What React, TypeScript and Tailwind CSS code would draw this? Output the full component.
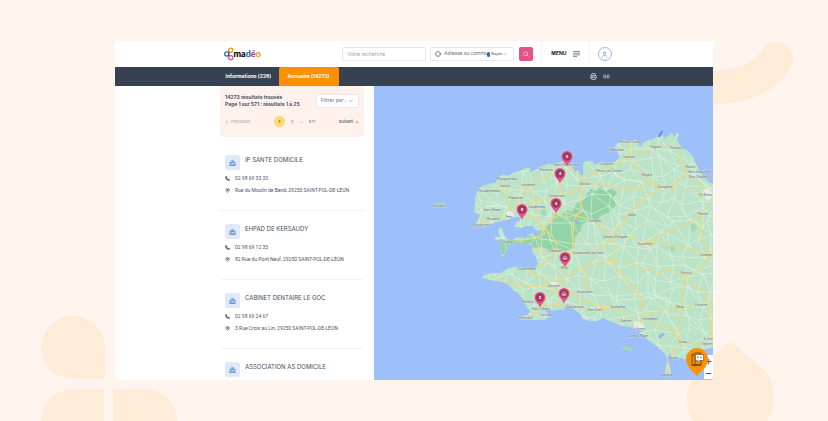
import { ArrowLeft, ArrowRight, ChevronDown, Crosshair, Link2, MapPin, Phone, Printer, Search, User } from "lucide-react";

type Result = { name: string; phone?: string; address?: string };

const results: Result[] = [
  { name: "IP SANTE DOMICILE", phone: "02 98 69 33 33", address: "Rue du Moulin de Band, 29250 SAINT-POL-DE-LÉON" },
  { name: "EHPAD DE KERSAUDY", phone: "02 98 69 12 35", address: "82 Rue du Pont Neuf, 29250 SAINT-POL-DE-LÉON" },
  { name: "CABINET DENTAIRE LE GOC", phone: "02 98 69 24 67", address: "3 Rue Croix au Lin, 29250 SAINT-POL-DE-LÉON" },
  { name: "ASSOCIATION AS DOMICILE" },
];

const COAST =
  "M475 226L477 221 480 215 474 212 475 205 475 198 477 192 480 187 488 184 495 183 498 178 502 175 508 176 513 173 520 171 528 167 531 169 529 173 535 170 540 167 548 164 557 164 563 161 568 163 573 167 575 172 578 170 580 174 583 176 583 170 583 163 587 161 592 161 595 165 601 162 607 163 615 162 620 157 617 151 614 148 617 144 623 140 630 141 637 140 640 147 645 141 650 140 657 137 662 132 664 139 668 136 672 133 674 137 677 133 679 134 677 139 679 143 682 148 688 151 693 157 695 161 697 166 701 173 706 180 713 184 720 186 720 346 706 349 701 353 694 349 689 355 687 360 680 358 673 358 669 353 668 361 670 368 671 373 666 376 665 370 667 362 667 357 661 350 655 345 648 340 641 334 636 329 630 327 623 326 617 324 609 321 603 318 597 321 590 321 583 319 579 313 575 310 571 307 567 303 564 310 557 310 552 311 549 307 545 310 550 317 544 320 533 320 520 319 519 317 528 315 530 311 526 306 522 298 518 293 513 290 509 285 505 283 497 281 490 280 482 278 484 275 492 273 500 273 507 269 513 267 520 267 528 269 535 270 538 263 536 257 532 252 533 246 527 243 516 243 508 246 505 253 502 258 501 249 502 243 495 239 494 237 500 237 498 230 502 227 503 232 506 238 512 240 518 237 526 238 531 234 538 234 541 231 535 230 533 226 526 226 521 228 514 227 516 223 520 220 521 217 515 217 506 220 496 222 486 226Z";

const FOREST =
  "M495 239L512 240 526 238 541 231 545 227 551 223 554 213 560 215 567 210 572 212 577 203 584 200 590 189 597 191 600 186 606 191 611 189 617 192 613 198 616 205 610 212 600 216 598 221 590 219 582 225 580 232 575 237 574 248 566 252 557 248 550 250 542 247 535 248 530 243 516 243 507 247 502 258 501 246Z";

const MAIN_ROADS = [
  "M475 224L493 220 506 215 513 208 530 203 545 199 560 195 573 192 583 183 598 184 620 188 641 189 650 181 657 186 668 188 678 192 690 191 713 194",
  "M583 183L588 176 602 171 613 166 622 160 630 156 645 151 660 147 672 146 680 149 682 163 686 174 677 183 665 187",
  "M625 142L630 145 629 156 636 165 642 175 650 181 664 187M686 174L695 183 706 189",
  "M567 166L577 174 583 183 580 198 581 211 575 217 573 231 573 249 568 263 560 275 554 285",
  "M511 210L507 197 506 184M516 207L529 185 535 200 538 218M520 210L532 218 539 219 543 228 552 235 558 250",
  "M509 242L531 239 545 234 541 226M556 212L552 219 543 229M552 219L565 212 580 217 595 221 606 231 613 236",
  "M613 236L630 237 645 243 662 242 675 247 693 250 713 256M613 236L621 225 630 212 640 203 652 193 665 187",
  "M645 243L658 236 672 230 690 223 702 213 710 202M702 213L701 229 704 244 713 256",
  "M533 248L544 252 556 251 575 254 590 253 604 247 613 236 615 248 612 260",
  "M554 285L565 277 585 266 612 260 630 263 647 270 659 273 668 269 686 275 701 270 706 260 713 255",
  "M612 260L622 275 632 288 642 300 644 316M686 275L683 292 681 308 680 325 680 342",
  "M686 275L693 285 707 292 709 310 711 330 713 344M681 308L701 304 713 302",
  "M554 285L563 286 573 293 579 300 591 303 609 307 621 311 628 320 636 324 645 318 655 323 666 328 674 334 682 342 697 344 713 344",
  "M637 323L650 315 665 309 681 308M554 285L540 287 522 285 508 283 493 277M554 285L546 296 541 308 529 317",
  "M527 269L537 276 554 285 558 294 560 304 573 306 591 310 618 307M527 269L541 266 556 252M586 292L587 280 582 266",
  "M682 342L673 353 668 359 668 373M541 308L551 305 560 305M565 173L560 182 560 195 556 212",
  "M553 174L545 177 529 185 518 184M488 191L502 190 506 184",
];

const towns: [string, number, number][] = [
  ["Ouessant", 438, 207], ["Plouescat", 546, 171], ["Saint-Pol-de-Léon", 567, 166], ["Plouguerneau", 507, 180],
  ["Lannilis", 505, 187], ["Lesneven", 528, 186], ["Ploudalmézeau", 489, 192], ["Plabennec", 516, 199],
  ["Saint-Renan", 492, 211], ["Plouzané", 493, 220], ["Brest", 509, 218], ["Plougonvelin", 482, 226],
  ["Landerneau", 537, 208], ["Landivisiau", 557, 197], ["Crozon", 508, 243], ["Morlaix", 585, 185],
  ["Perros-Guirec", 630, 143], ["Trébeurden", 616, 151], ["Lannion", 629, 158], ["Tréguier", 655, 148],
  ["Paimpol", 676, 149], ["Locquirec", 607, 165], ["Plestin-les-Grèves", 609, 172], ["Bégard", 647, 176],
  ["Guingamp", 665, 188], ["Plouha", 690, 168], ["Saint-Quay-Portr.", 700, 173], ["Binic-Étables-s.", 700, 178],
  ["St-Brieuc", 706, 196], ["Plaintel", 703, 215], ["Callac", 632, 216], ["Huelgoat", 595, 222],
  ["Carhaix-Plouguer", 615, 238], ["Rostrenen", 645, 245], ["Châteaulin", 555, 252], ["Châteauneuf-du-Faou", 588, 254],
  ["Loudéac", 706, 256], ["Douarnenez", 527, 270], ["Briec", 565, 269], ["Quimper", 554, 287],
  ["Pontivy", 686, 274], ["Rosporden", 585, 293], ["Plonéour", 528, 303], ["Pont-l'Abbé", 540, 310],
  ["Penmarch", 526, 319], ["Loctudy", 546, 316], ["Concarneau", 575, 308], ["Pont-Aven", 595, 311],
  ["Quimperlé", 618, 308], ["Quéven", 626, 322], ["Hennebont", 650, 320], ["Lorient", 640, 330],
  ["Larmor-Plage", 638, 337], ["Baud", 680, 308], ["Locminé", 701, 306], ["Auray", 683, 343],
  ["Vannes", 707, 345], ["St-Avé", 708, 340], ["Carnac", 673, 359], ["Quiberon", 667, 376],
];

const pins = [
  { label: "5", x: 567, y: 157 },
  { label: "4", x: 560, y: 174 },
  { label: "4", x: 556, y: 204 },
  { label: "8", x: 522, y: 210 },
  { label: "", x: 565, y: 258 },
  { label: "", x: 564, y: 294 },
  { label: "2", x: 540, y: 298 },
];

// country lanes: a jittered grid, clipped by the coast
function laneNetwork() {
  const step = 13;
  const jitter = (a: number, b: number) => {
    const v = Math.sin(a * 127 + b * 311) * 43758;
    return (v - Math.floor(v)) * step;
  };
  const at = (i: number, j: number) =>
    `${Math.round(472 + i * step + jitter(i, j))} ${Math.round(128 + j * step + jitter(j + 40, i))}`;
  let d = "";
  for (let i = -1; i < 20; i++) {
    for (let j = -1; j < 20; j++) {
      d += `M${at(i, j)}L${at(i + 1, j)}M${at(i, j)}L${at(i, j + 1)}`;
      if ((i * 3 + j) % 2 === 0) d += `M${at(i, j)}L${at(i + 1, j + 1)}`;
    }
  }
  return d;
}

const LANES = laneNetwork();

function BrittanyMap() {
  return (
    <svg viewBox="374 86 339 294" preserveAspectRatio="xMinYMin slice" className="absolute inset-0 h-full w-full" role="img" aria-label="Carte">
      <defs>
        <clipPath id="land">
          <path d={COAST} />
        </clipPath>
      </defs>
      <rect x="374" y="86" width="900" height="900" fill="#9dc0fa" />
      <path d={COAST} fill="#bbe3c7" />
      <g clipPath="url(#land)" fill="none" strokeLinejoin="round">
        <path d={FOREST} fill="#93d3a5" />
        <path d="M689 225l6-2 2 6-5 3zM665 247l7-2 4 5-6 3zM610 167l5 1-2 4zM540 212l5-4 2 6-4 3z" fill="#a4d9b2" />
        <path d={LANES} stroke="#e6f3e4" strokeWidth="0.7" opacity="0.85" />
        {MAIN_ROADS.map((d) => (
          <path key={d} d={d} stroke="#f1d67f" strokeWidth="1.2" />
        ))}
        <path d="M503 216l5-5 5 1 1 5-7 3zM703 190l6-2 5 7-6 6-4-4zM634 321l6 1 5 5-6 6-5-5zM551 282l6 0 1 4-6 1z" fill="#eceef0" opacity="0.85" />
        <path d="M574 220l5 1 0 3-4-1zM658 336l4-3 3 1-5 5zM637 324l2 6 5 2-6 0z" fill="#8fb8f3" />
      </g>
      <path d="M658 136l2-4 3-2-1 5-3 3z" fill="#5b97f0" />
      <path d="M434 205l4-2 5-1 2 3-5 2zM621 346l6 0 6 3-1 2-7-1zM681 133l2 3-1 2z" fill="#a6d9b2" />
      <g fontFamily="Inter, sans-serif" fontSize="3" fill="#535d66" stroke="#e6f1ea" strokeWidth="0.3" paintOrder="stroke" textAnchor="middle">
        {towns.map(([name, x, y]) => (
          <text key={name} x={x} y={y}>{name}</text>
        ))}
      </g>
      {pins.map((pin) => (
        <g key={`${pin.x}-${pin.y}`} transform={`translate(${pin.x} ${pin.y})`}>
          <path d="M0 9.500C-1.500 5.500-5.500 3.500-5.500-.5a5.500 5.500 0 1 1 11 0C5.500 3.500 1.500 5.500 0 9.500Z" fill="#e65587" />
          <circle cy="-0.500" r="4.200" fill="#9f3560" />
          {pin.label ? (
            <text y="1" fontSize="4" fontWeight="700" fontFamily="Inter, sans-serif" fill="#fff" textAnchor="middle">{pin.label}</text>
          ) : (
            <path d="M-2 1.200V-.6L0-2.200 2-.6V1.200ZM-.5 1.200V0H.5V1.200" fill="none" stroke="#f6dce6" strokeWidth="0.7" />
          )}
        </g>
      ))}
    </svg>
  );
}

function Logo() {
  return (
    <a href="#" aria-label="madéo" className="flex items-center text-black">
      <svg viewBox="0 0 10 14" className="h-[14px] w-[10px]" fill="none" strokeWidth="1.300">
        <circle cx="6.700" cy="3.200" r="2.100" stroke="#f59517" />
        <circle cx="2.800" cy="7" r="2.100" stroke="#2b62c4" />
        <circle cx="6.700" cy="10.800" r="2.100" stroke="#e65587" />
        <path d="M5 4.800q0 1.500-1 1.500M5 9.200q0-1.200-1-1.500" stroke="#444a75" />
      </svg>
      <span className="font-['Lato'] text-[9px] leading-3 font-black">
        ma<span className="text-[#2b62c4]">d</span><span className="text-[#b0417f]">é</span><span className="text-[#f59517]">o</span>
      </span>
    </a>
  );
}

function BuildingIcon() {
  return (
    <span className="flex size-[15px] shrink-0 items-center justify-center rounded-[2px] bg-[#e0e9f8]">
      <svg viewBox="0 0 16 16" className="size-[7px]" fill="none" stroke="#5f88c6" strokeWidth="1.800">
        <path d="M1 15h14M2 15V8h3M14 15V8h-3M5 15V5l3-3 3 3v10M8 5v4M6 7h4M8 15v-3" />
      </svg>
    </span>
  );
}

function ResultCard({ name, phone, address }: Result) {
  return (
    <li className="h-[69px] shrink-0 border-b border-gray-100 pl-[5px] pt-[13px]">
      <div className="flex gap-[5px]">
        <BuildingIcon />
        <h2 className="text-[6px] leading-[9px] text-[#3f4a5c]">{name}</h2>
      </div>
      {phone && (
        <p className="mt-[5px] flex items-center gap-[5px] font-['Roboto',sans-serif] text-[5px] leading-[7px] text-[#4a5568]">
          <Phone className="size-[5px] fill-current" />
          {phone}
        </p>
      )}
      {address && (
        <p className="mt-[5px] flex items-center gap-[5px] whitespace-nowrap font-['Roboto',sans-serif] text-[5px] leading-[7px] text-[#4a5568]">
          <MapPin className="size-[5px]" strokeWidth={3} />
          {address}
        </p>
      )}
    </li>
  );
}

function Header() {
  return (
    <header className="flex h-[26px] shrink-0 justify-center pl-[7px]">
      <div className="flex w-[388px] items-center">
        <Logo />
        <input
          type="search"
          aria-label="Votre recherche"
          placeholder="Votre recherche"
          className="ml-auto h-[14px] w-[84px] rounded-[2px] border border-gray-200 px-1 text-[5px] placeholder:text-gray-400"
        />
        <label className="ml-1 flex h-[14px] w-[84px] items-center rounded-[2px] border border-gray-200 px-1">
          <Crosshair className="size-[6px] shrink-0 text-gray-600" />
          <input
            aria-label="Adresse ou commune"
            placeholder="Adresse ou commu"
            className="ml-[3px] w-[43px] min-w-0 font-['Roboto',sans-serif] text-[5px] placeholder:text-gray-500"
          />
          <span className="h-[5px] w-[3px] shrink-0 rounded-full bg-[#24799b]" />
          <span className="ml-px font-['Roboto',sans-serif] text-[4px] text-gray-600">Rayon</span>
          <ChevronDown className="ml-px size-1 shrink-0 text-gray-600" />
        </label>
        <button aria-label="Rechercher" className="ml-[5px] flex size-[14px] items-center justify-center rounded-[2px] bg-[#e35384] text-white">
          <Search className="size-[6px]" />
        </button>
        <div className="ml-2 flex h-[26px] items-center border-x border-gray-100 px-[9px]">
          <button className="flex items-center gap-[6px] text-[5px] font-bold text-gray-900">
            MENU
            <svg viewBox="0 0 7 6" className="h-[6px] w-[7px]" stroke="#6b7686" strokeWidth="0.800">
              <path d="M0 .5h7M0 2.200h7M0 3.900h7M0 5.500h4" />
            </svg>
          </button>
        </div>
        <button aria-label="Mon compte" className="ml-2 flex size-[14px] items-center justify-center rounded-full border border-[#9db7e0] text-[#5f88c6]">
          <User className="size-[7px]" />
        </button>
      </div>
    </header>
  );
}

function Tabs() {
  return (
    <nav className="flex h-[19px] shrink-0 justify-center bg-[#364152] pl-[7px] text-white">
      <div className="flex w-[388px] items-center px-[2px] text-[5px] font-bold">
        <a href="#informations" className="w-[53px]">Informations (228)</a>
        <a href="#annuaire" className="flex h-full w-[60px] items-center justify-center rounded-t-[2px] bg-[#fb9003]">Annuaire (14273)</a>
        <button aria-label="Imprimer" className="ml-auto"><Printer className="size-[7px]" /></button>
        <button aria-label="Copier le lien" className="ml-[6px]"><Link2 className="size-[7px]" /></button>
      </div>
    </nav>
  );
}

function Decor() {
  return (
    <>
      <div className="absolute bottom-[42px] left-[41px] h-[63px] w-16 rounded-[32px] rounded-br-[3px] bg-[#feebd8]" />
      <div className="absolute -bottom-8 left-[41px] h-16 w-[63px] rounded-tl-[32px] rounded-tr-[2px] bg-[#feebd8]" />
      <div className="absolute -bottom-8 left-[113px] h-16 w-16 rounded-tl-[2px] rounded-tr-[32px] bg-[#feebd8]" />
      <svg viewBox="0 0 128 90" className="absolute right-0 top-[30px] h-[90px] w-32">
        <path d="M76 29C66 47 46 58 0 58" fill="none" stroke="#feebd8" strokeWidth="34" strokeLinecap="round" />
      </svg>
      <svg viewBox="0 0 88 80" className="absolute bottom-0 right-[53px] h-20 w-[88px]">
        <path d="M38 4Q43-1 48 4L74 26C84 34 87 46 87 58C87 68 83 76 79 82H8C3 76 0 68 0 58C0 46 5 36 12 29Z" fill="#feebd8" />
      </svg>
    </>
  );
}

export default function App() {
  return (
    <div className="relative flex h-screen flex-col overflow-hidden bg-[#fff5ee] px-[115px] py-[41px] font-['Inter',sans-serif]">
      <Decor />
      <div className="relative flex min-h-0 flex-1 flex-col overflow-hidden rounded-[3px] bg-white">
        <Header />
        <Tabs />
        <main className="grid min-h-0 flex-1 grid-cols-[259px_1fr]">
          <section className="ml-auto mr-[10px] flex w-36 min-h-0 flex-col overflow-hidden">
            <div className="h-[51px] shrink-0 rounded-b-[4px] bg-[#fff1eb] px-[5px] pt-2 text-[#4a5568]">
              <div className="flex items-start justify-between">
                <p className="whitespace-nowrap text-[5px] leading-[7px] font-bold">
                  14273 résultats trouvés
                  <br />
                  Page 1 sur 571 : résultats 1 à 25
                </p>
                <button className="flex h-[14px] w-[43px] items-center justify-center gap-[2px] rounded-[2px] border border-gray-200 bg-white text-[5px] text-gray-500">
                  Filtrer par :
                  <ChevronDown className="size-[6px]" />
                </button>
              </div>
              <div className="mt-2 flex items-center justify-between text-[4px]">
                <button disabled className="flex items-center gap-[2px] text-gray-400">
                  <ArrowLeft className="size-1" /> Précédent
                </button>
                <div className="flex items-center gap-[6px]">
                  <span className="flex size-[11px] items-center justify-center rounded-full bg-[#ffda73] font-bold">1</span>
                  <a href="#2">2</a>
                  <span>...</span>
                  <a href="#571">571</a>
                </div>
                <button className="flex items-center gap-[2px] font-medium">
                  Suivant <ArrowRight className="size-1" />
                </button>
              </div>
            </div>
            <ul className="mt-[5px] flex flex-col">
              {results.map((result) => (
                <ResultCard key={result.name} {...result} />
              ))}
            </ul>
          </section>
          <section className="relative overflow-hidden bg-[#9dc0fa]">
            <BrittanyMap />
            <div className="absolute bottom-px right-0 flex w-[9px] flex-col bg-white text-[#555]">
              <button aria-label="Zoom avant" className="h-3 text-[12px] leading-3">+</button>
              <button aria-label="Zoom arrière" className="h-3 text-[12px] leading-3">−</button>
            </div>
            <button aria-label="Assistance" className="absolute bottom-1 right-[5px]">
              <svg viewBox="0 0 22 28" className="h-7 w-[22px]">
                <path d="M11 28C9 25 0 20 0 11a11 11 0 1 1 22 0C22 20 13 25 11 28Z" fill="#f99207" />
                <path d="M6 6.500l4-1.500h5v12H6zM6 6.500L9 8v10L6 17M9 17h6" fill="none" stroke="#4c3216" strokeWidth="0.800" />
                <path d="M9.500 6.500h8v6h-4l-2 2v-2h-2z" fill="#fff" stroke="#4c3216" strokeWidth="0.500" />
                <path d="M12 8.500v1.700M15 8.500v1.700" stroke="#4c3216" strokeWidth="0.900" />
              </svg>
            </button>
          </section>
        </main>
      </div>
    </div>
  );
}
